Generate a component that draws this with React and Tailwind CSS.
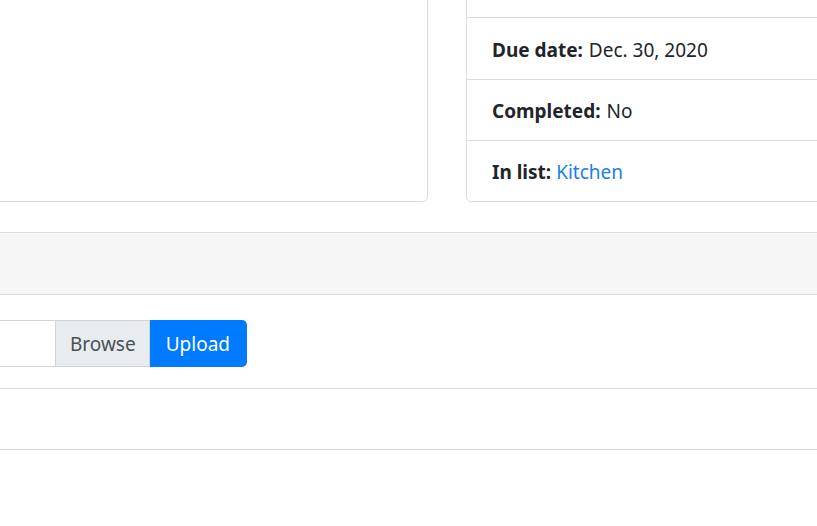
export default function App() {
  const font = { fontFamily: '"Noto Sans", "Open Sans", sans-serif' };
  return (
    <div className="w-[817px] h-[526px] overflow-hidden bg-white text-[#212529] text-[19px] leading-[30px]" style={font}>
      <div className="flex items-start -mt-[44px] -ml-[20px] -mr-[20px] gap-[38px]">
        <div className="w-[448px] h-[246px] shrink-0 border border-[#dcdcdc] rounded-[5px] bg-white" />
        <div className="flex-1 flex flex-col border border-[#dcdcdc] rounded-[5px] bg-white">
          <div className="h-[61px] border-b border-[#dcdcdc]" />
          <div className="h-[62px] border-b border-[#dcdcdc] flex items-center px-[25px] pt-[2px]">
            <span className="font-bold">Due date:</span>
            <span className="ml-[6px]">Dec. 30, 2020</span>
          </div>
          <div className="h-[61px] border-b border-[#dcdcdc] flex items-center px-[25px] pt-[1px]">
            <span className="font-bold">Completed:</span>
            <span className="ml-[6px]">No</span>
          </div>
          <div className="h-[60px] flex items-center px-[25px] pt-[1px]">
            <span className="font-bold">In list:</span>
            <a className="ml-[5px] text-[#1a7ef0]">Kitchen</a>
          </div>
        </div>
      </div>

      <div className="mt-[30px] -mx-[20px] border border-[#dcdcdc] rounded-[5px] flex flex-col">
        <div className="h-[62px] bg-[#f6f6f6] border-b border-[#dcdcdc]" />
        <div className="h-[94px] border-b border-[#dcdcdc] pt-[25px]">
          <div className="flex h-[47px]">
            <div className="w-[74px] h-full border border-[#ced4da] border-r-0 bg-white" />
            <div className="h-full flex items-center pl-[14px] pr-[13px] pt-[1px] bg-[#e9ecef] border border-[#ced4da] text-[#495057]">Browse</div>
            <button className="h-full flex items-center pl-[16px] pr-[17px] pt-[1px] bg-[#007bff] text-white rounded-r-[5px]">Upload</button>
          </div>
        </div>
        <div className="h-[60px]" />
      </div>
    </div>
  );
}
